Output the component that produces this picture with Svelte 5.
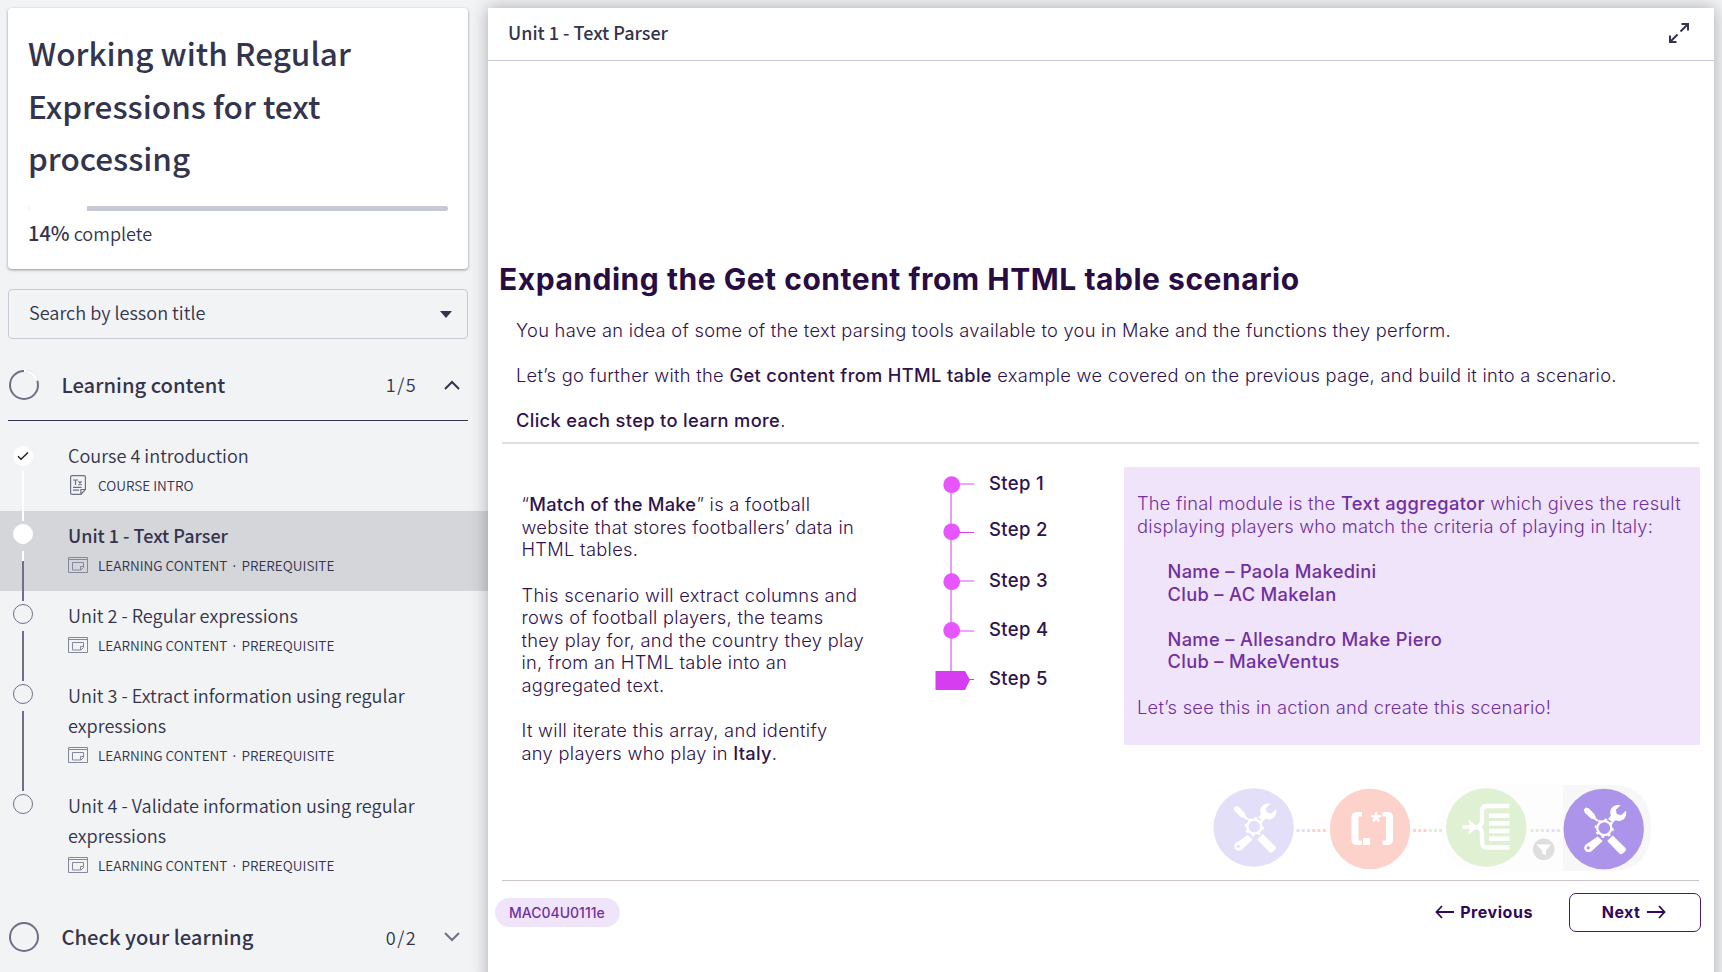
<script>
  const prerequisite = ['LEARNING CONTENT', 'PREREQUISITE'];
  const lessons = [
    { title: ['Course 4 introduction'], meta: ['COURSE INTRO'], icon: 'text', state: 'done' },
    { title: ['Unit 1 - Text Parser'], meta: prerequisite, icon: 'module', state: 'current' },
    { title: ['Unit 2 - Regular expressions'], meta: prerequisite, icon: 'module', state: 'open' },
    { title: ['Unit 3 - Extract information using regular', 'expressions'], meta: prerequisite, icon: 'module', state: 'open' },
    { title: ['Unit 4 - Validate information using regular', 'expressions'], meta: prerequisite, icon: 'module', state: 'last' }
  ];
  const steps = ['Step 1', 'Step 2', 'Step 3', 'Step 4', 'Step 5'];
  const teeth = [0, 45, 90, 135, 180, 225, 270, 315];
  const dots = [
    [1298, '#e3dff8'], [1303.3, '#e3dff8'], [1308.6, '#e3dff8'], [1313.8, '#fcd2ca'], [1319, '#fcd2ca'], [1324.3, '#fcd2ca'],
    [1414.6, '#fcd2ca'], [1419.8, '#fcd2ca'], [1425, '#fcd2ca'], [1430.2, '#e0f0d2'], [1435.5, '#e0f0d2'], [1440.6, '#e0f0d2'],
    [1532, '#e0f0d2'], [1537.2, '#e0f0d2'], [1542.4, '#e0f0d2'], [1547.7, '#e3dff8'], [1553, '#e3dff8'], [1558.3, '#e3dff8']
  ];
</script>

{#snippet tools(bg)}
  <g fill="#fff" stroke="none">
    <path d="M-20-19.200l2-2.200 3 .7 6 6.200 1.200 3.400 6 5.600-1.400 1.500-6-5.600-3.500-1-6.200-5.600z" />
    <path d="M22.300-18.200l-5 4.400-4.200-1.300-1-4.200 4.700-4.400c-4.600-1.200-10 1.500-10.300 6.800 0 1.400.2 2.600.6 3.600l-3 3.500 4.200 4.200 3.600-3.200c6.500 2.600 12-2.400 10.400-9.400z" />
    <path d="M-6 7.500l5 4.500-11.500 10.500c-4.600 2.400-8.800-1.800-6-6.500z" />
    <path d="M9 6.500l12.500 12.300c1 1.200 1 2.400 0 3.400l-2.500 2.400c-1 .9-2.300.9-3.300 0L3.500 12z" />
    <circle cx="-15.400" cy="18.800" r="1.600" fill={bg} />
    <circle cx="0.600" cy="-.8" r="10" fill={bg} />
    <circle cx="0.600" cy="-.8" r="7" fill="none" stroke="#fff" stroke-width="2.300" />
    {#each teeth as a}
      <rect x="-1.400" y="-9.600" width="2.800" height="2.300" transform="translate(.6 -.8) rotate({a + 10})" />
    {/each}
  </g>
{/snippet}

<div class="page">
  <aside>
    <section class="card">
      <h1>Working with Regular<br />Expressions for text<br />processing</h1>
      <div class="progress"><i></i><b></b></div>
      <p class="complete"><strong>14%</strong> complete</p>
    </section>

    <div class="search">
      <span class="placeholder">Search by lesson title</span>
      <svg width="12" height="7" viewBox="0 0 12 7"><path d="M0 0h12L6 7z" fill="#33344d" /></svg>
    </div>

    <div class="section open">
      <svg class="ring" width="32" height="32" viewBox="0 0 32 32" fill="none" stroke-width="2">
        <circle cx="16" cy="16" r="14" stroke="#6e7087" />
        <path d="M16 2a14 14 0 0 1 13.300 9.700" stroke="#fff" stroke-width="2.600" />
      </svg>
      <h2>Learning content</h2>
      <span class="count">1/5</span>
      <svg width="16" height="10" viewBox="0 0 16 10" fill="none" stroke="#33344d" stroke-width="2"><path d="M1 9l7-7 7 7" /></svg>
    </div>

    <ul>
      {#each lessons as l}
        <li class={l.state}>
          <div class="rail">
            <span class="dot">
              {#if l.state === 'done'}
                <svg width="12" height="10" viewBox="0 0 12 10" fill="none" stroke="#222" stroke-width="1.500"><path d="M1 5.200l3 3L11 1.500" /></svg>
              {/if}
            </span>
            {#if l.state !== 'last'}<span class="line"></span>{/if}
          </div>
          <div class="lesson">
            <div class="title">{#each l.title as t, i}{#if i}<br />{/if}{t}{/each}</div>
            <div class="meta">
              {#if l.icon === 'text'}
                <svg width="20" height="20" viewBox="0 0 20 20" fill="none" stroke="#6e7087" stroke-width="1.200">
                  <path d="M4 .6h12q1.400 0 1.400 1.400v12.500l-4.500 4.900H4q-1.400 0-1.400-1.400V2Q2.600.6 4 .6zM17.400 14.500h-4.500v4.900M5 12.300h8.500M5 15.200h6M5 5h5M7.500 5v5M10.500 6.200l3 4M13.500 6.200l-3 4" />
                </svg>
              {:else}
                <svg width="20" height="20" viewBox="0 0 20 20" fill="none" stroke="#85879b" stroke-width="1">
                  <path d="M.5 2.500h19v15H.5zM.5 4.500h19M4.500 7.500h11v5l-2.500 2.500H4.500zM15.500 11.500H12.500V15" />
                </svg>
              {/if}
              <span>{l.meta[0]}{#if l.meta[1]}<i class="sep">·</i>{l.meta[1]}{/if}</span>
            </div>
          </div>
        </li>
      {/each}
    </ul>

    <div class="section">
      <svg class="ring" width="32" height="32" viewBox="0 0 32 32" fill="none" stroke-width="2">
        <circle cx="16" cy="16" r="14" stroke="#6e7087" />
      </svg>
      <h2>Check your learning</h2>
      <span class="count">0/2</span>
      <svg width="16" height="10" viewBox="0 0 16 10" fill="none" stroke="#6e7087" stroke-width="2"><path d="M1 1l7 7 7-7" /></svg>
    </div>
  </aside>

  <main>
    <header>
      <span>Unit 1 - Text Parser</span>
      <svg width="20" height="20" viewBox="0 0 20 20" fill="none" stroke="#33344d" stroke-width="2">
        <path d="M12.500 1H19v6.500M19 1l-7.500 7.500M1 12.500V19h6.500M1 19l7.500-7.500" />
      </svg>
    </header>

    <div class="slide">
      <h3>Expanding the Get content from HTML table scenario</h3>
      <div class="intro">
        <p>You have an idea of some of the text parsing tools available to you in Make and the functions they perform.</p>
        <p class="lead">Let’s go further with the <b>Get content from HTML table</b> example we covered on the previous page, and build it into a scenario.</p>
        <p><b>Click each step to learn more</b>.</p>
      </div>
      <hr />

      <div class="columns">
        <div class="story">
          <p>“<b>Match of the Make</b>” is a football<br />website that stores footballers’ data in<br />HTML tables.</p>
          <p>This scenario will extract columns and<br />rows of football players, the teams<br />they play for, and the country they play<br />in, from an HTML table into an<br />aggregated text.</p>
          <p>It will iterate this array, and identify<br />any players who play in <b>Italy</b>.</p>
        </div>

        <div class="steps">
          <svg width="40" height="226" viewBox="935 471 40 226">
            <path d="M951 484v190" stroke="#e38cf3" stroke-width="1.700" />
            <path d="M958 484h16M958 581h16M958 631h16" stroke="#e38cf3" stroke-width="1.700" />
            <path d="M958 532.500h16M968 679.500h6" stroke="#d63cf0" stroke-width="1.200" />
            <g fill="#e755ff">
              <circle cx="951.700" cy="484.700" r="8.400" />
              <circle cx="951.700" cy="531.800" r="8.400" />
              <circle cx="951.700" cy="581.700" r="8.400" />
              <circle cx="951.700" cy="630.400" r="8.400" />
            </g>
            <path d="M935.500 671h29.500l5 9-5 10h-29.500z" fill="#d63cf0" />
          </svg>
          <div class="labels">
            {#each steps as s}<span>{s}</span>{/each}
          </div>
        </div>

        <div class="note">
          <p>The final module is the <b>Text aggregator</b> which gives the result<br />displaying players who match the criteria of playing in Italy:</p>
          <p class="names">Name – Paola Makedini<br />Club – AC Makelan</p>
          <p class="names">Name – Allesandro Make Piero<br />Club – MakeVentus</p>
          <p class="closing">Let’s see this in action and create this scenario!</p>
        </div>
      </div>

      <svg class="modules" width="460" height="90" viewBox="1200 784 460 90">
        <path d="M1563 785h-80q-42 0-42 43t42 43h80z" fill="#fdfdfd" />
        <path d="M1563 785h48q40 0 40 43t-40 43h-48z" fill="#f7f7f7" />
        {#each dots as [x, c]}<rect x={x - 1.500} y="829" width="3" height="3" fill={c} />{/each}
        <ellipse cx="1253.700" cy="827.500" rx="40.200" ry="39.200" fill="#e3dff8" />
        <g transform="translate(1253.700 827.500)">{@render tools('#e3dff8')}</g>
        <circle cx="1370" cy="829" r="40.200" fill="#fcd2ca" />
        <path d="M1362 812h-5q-5.500 0-5.500 5v23q0 5 5.500 5h5v-4.500h-3.500v-24h3.500zM1382.500 812h5q5.500 0 5.500 5v23q0 5-5.500 5h-5v-4.500h3.500v-24h-3.500zM1363 838h7v7h-7z" fill="#fff" />
        <path d="M1376 817.300v-5.300M1376 817.300l-4.900-1.600M1376 817.300l4.900-1.600M1376 817.300l-3 4.200M1376 817.300l3 4.200" stroke="#fff" stroke-width="2.400" />
        <ellipse cx="1486.300" cy="827.500" rx="40.200" ry="39.200" fill="#e0f0d2" />
        <g fill="none" stroke="#fff" stroke-width="4.400">
          <path d="M1509.500 806h-22q-5.500 0-5.500 5v10q0 4-4.500 6 4.500 2 4.500 6v9q0 5.500 5.500 5.500h22" />
          <path d="M1489 815.700h20.500M1489 823.300h20.500M1489 831h20.500M1489 838.700h20.500" />
          <path d="M1462 827h10" stroke-width="3.600" />
        </g>
        <path d="M1468 819l10 8-10 8 2.500-8z" fill="#fff" />
        <circle cx="1543.700" cy="849.300" r="10.800" fill="#dedede" />
        <path d="M1536.500 844.500h14.500l-5 6v5l-4-2v-3z" fill="#fff" />
        <circle cx="1603.700" cy="829" r="40.200" fill="#ab94ea" />
        <g transform="translate(1603.700 829)">{@render tools('#ab94ea')}</g>
      </svg>

      <hr class="bottom" />

      <footer>
        <span class="code">MAC04U0111e</span>
        <span class="prev">
          <svg width="19" height="14" viewBox="0 0 19 14" fill="none" stroke="#30085c" stroke-width="1.800"><path d="M19 7H1.500M7 1L1.500 7 7 13" /></svg>
          <span>Previous</span>
        </span>
        <button>
          <span>Next</span>
          <svg width="19" height="14" viewBox="0 0 19 14" fill="none" stroke="#30085c" stroke-width="1.800"><path d="M0 7h17.500M12 1l5.500 6-5.500 6" /></svg>
        </button>
      </footer>
    </div>
  </main>
</div>

<style>
  :global(body) { background: #f2f3f5; overflow: hidden; }
  * { box-sizing: border-box; }
  .page {
    display: flex; width: 1722px; height: 972px; overflow: hidden;
    background: #f2f3f5; color: #33344d;
    font-family: "Noto Sans CJK SC", sans-serif; font-size: 18.100px; line-height: 30px; font-weight: 350;
  }
  h1, h2, h3, p, ul { margin: 0; padding: 0; font-weight: inherit; }
  aside { width: 488px; flex: none; padding-top: 8px; }
  .card {
    width: 460px; height: 261px; margin-left: 8px; padding: 18px 20px; background: #fff;
    border-radius: 4px; box-shadow: 0 1px 3px rgba(0, 0, 0, .4);
  }
  h1 { font-size: 31.500px; line-height: 52.500px; font-weight: 500; white-space: nowrap; }
  .progress { display: flex; height: 5px; margin: 22px 0 7px 0; gap: 57px; }
  .progress i { width: 2px; border-radius: 2px 0 0 2px; background: #f6f6f8; }
  .progress b { width: 361px; border-radius: 0 3px 3px 0; background: #c7c9d6; }
  .complete strong { font-weight: 500; font-size: 20px; }
  .search {
    display: flex; align-items: center; justify-content: space-between;
    width: 460px; height: 50px; margin: 20px 0 10px 8px; padding: 0 15px 0 20px;
    border: 1px solid #c7c9d6; border-radius: 4px;
  }
  .placeholder { padding-bottom: 4px; }
  .section { display: flex; align-items: center; width: 460px; height: 72px; margin-left: 8px; padding-right: 8px; }
  .section.open { border-bottom: 1px solid #33344d; }
  .ring { flex: none; margin-left: -0.500px; }
  h2 { flex: 1; margin-left: 22px; font-size: 20.200px; font-weight: 500; }
  .count { margin-right: 27px; letter-spacing: 1.400px; padding-bottom: 1px; }
  ul { list-style: none; padding: 10px 0; }
  li { display: flex; padding-bottom: 16px; height: 80px; }
  li:nth-child(n + 4) { height: 110px; }
  li.current { background: #d5d6da; }
  li.current .title { font-weight: 500; font-size: 18px; }
  .rail { display: flex; flex-direction: column; align-items: center; width: 20px; margin: 13px 35px 0 13px; }
  li.done .rail { margin-top: 15px; }
  .dot { flex: none; display: flex; align-items: center; justify-content: center; width: 20px; height: 20px; border-radius: 50%; border: 1px solid #6e7087; }
  .done .dot, .current .dot { border-color: #fff; background: #fff; }
  .line { flex: none; width: 2px; height: 50px; margin-top: 7px; background: #6e7087; }
  li:nth-child(4) .line { height: 80px; }
  .done .line { margin-top: 5px; background: #fff; }
  .current .line { background: linear-gradient(#fff 10px, #6e7087 10px); }
  .lesson { padding-top: 9px; white-space: nowrap; }
  .meta { display: flex; align-items: center; gap: 10px; margin-top: 5px; font-size: 13.580px; line-height: 20px; }
  .sep { display: inline-block; width: 14px; text-align: center; font-style: normal; font-weight: 500; font-family: "Open Sans", sans-serif; line-height: 1; }

  main {
    position: relative; width: 1226px; height: 980px; margin-top: 8px; background: #fff;
    box-shadow: 0 0 16px rgba(0, 0, 0, .3); color: #30124d;
    font-family: Inter, sans-serif; font-weight: 300; font-size: 18.300px; line-height: 22.640px; letter-spacing: .270px;
  }
  header {
    display: flex; align-items: center; justify-content: space-between; height: 53px; padding: 0 25px 5px 20px;
    border-bottom: 1px solid #c7c9d6; color: #33344d; letter-spacing: 0;
    font-family: "Noto Sans CJK SC", sans-serif; font-size: 18px; line-height: 30px; font-weight: 500;
  }
  header svg { margin-top: 3px; }
  .slide { white-space: nowrap; }
  h3 { margin: 198px 0 0 11px; font-size: 30px; line-height: 40px; font-weight: 700; letter-spacing: .520px; color: #290c42; }
  b { font-weight: 500; letter-spacing: .330px; }
  .intro { display: flex; flex-direction: column; gap: 22.500px; padding: 20px 0 10px 28px; height: 143px; }
  .intro .lead { letter-spacing: .290px; }
  hr { margin: 0 15px 0 14px; height: 2px; border: 0; background: #e2dee1; }
  .columns { display: flex; padding: 23px 14px 0 33.500px; height: 340px; }
  .story { width: 413.500px; padding-top: 26px; letter-spacing: .300px; }
  .story b { letter-spacing: .250px; }
  p + p { margin-top: 22.640px; }
  .intro p + p { margin-top: 0; }
  .steps { display: flex; gap: 14px; width: 189px; padding-top: 4px; }
  .steps svg { flex: none; }
  .labels { display: flex; flex-direction: column; font-weight: 500; font-size: 18.500px; line-height: 24px; letter-spacing: .350px; }
  .labels span:nth-child(2) { margin-top: 22px; }
  .labels span:nth-child(3) { margin-top: 27px; }
  .labels span:nth-child(n + 4) { margin-top: 25px; }
  .note { width: 576px; height: 278px; padding: 25px 13px; background: #f0e4fa; color: #7030a0; letter-spacing: .240px; }
  .names { padding-left: 30.500px; font-weight: 500; letter-spacing: .330px; }
  .closing { letter-spacing: .280px; }
  .modules { display: block; margin-left: 712px; }
  hr.bottom { margin-top: 6px; height: 1px; background: #cbc3ca; }
  footer { display: flex; align-items: center; height: 39px; margin: 12px 13px 0 7px; font-size: 16px; }
  .code { padding: 0 15px 0 14px; height: 29px; line-height: 29px; border-radius: 15px; background: #f0e4fa; color: #7030a0; font-size: 14px; font-weight: 500; letter-spacing: 0; }
  .prev { display: flex; align-items: center; gap: 6px; margin-left: auto; margin-right: 36px; color: #30085c; font-weight: 700; letter-spacing: .550px; }
  button {
    display: flex; align-items: center; justify-content: center; gap: 7px; width: 132px; height: 39px; padding: 0 8px 2px 6px;
    border: 1.500px solid #4a1a7a; border-radius: 7px; background: #fff; color: #30085c;
    font: 700 16px/20px Inter, sans-serif; letter-spacing: .400px;
  }
</style>
